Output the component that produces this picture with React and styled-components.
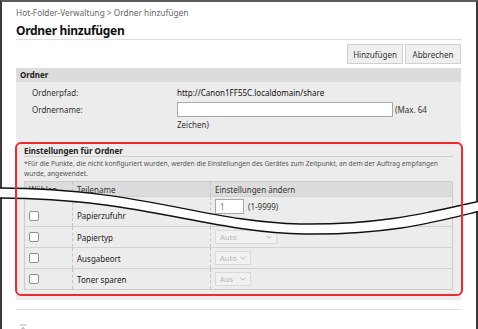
import React from "react";
import styled, { createGlobalStyle } from "styled-components";

const GlobalStyle = createGlobalStyle`
  html, body { margin: 0; padding: 0; background: #fff; }
  body { font-family: "Noto Sans", "Open Sans", sans-serif; color: #333; }
  * { box-sizing: border-box; }
`;

const Shot = styled.div`
  position: relative;
  width: 478px;
  height: 329px;
  overflow: hidden;
`;

const Frame = styled.div`
  height: 100%;
  background: #fff;
  border-top: 2px solid #5c5c5c;
  border-left: 2px solid #3a3a3a;
  border-right: 2px solid #3a3a3a;
  padding: 0 14px;
`;

const Crumb = styled.div`
  margin-top: 5px;
  font-size: 8.3px;
  line-height: 12px;
  color: #666;
`;

const Title = styled.h1`
  margin: 4px 0 0;
  font-size: 12px;
  line-height: 16px;
  letter-spacing: -0.3px;
  font-weight: 700;
  color: #111;
  border-bottom: 1px solid #dedede;
`;

const Toolbar = styled.div`
  display: flex;
  justify-content: flex-end;
  gap: 2px;
  margin-top: 4px;
  padding-right: 1px;
`;

const Button = styled.button`
  width: 56px;
  height: 20px;
  padding: 0;
  font-family: inherit;
  font-size: 8px;
  color: #333;
  background: #efefef;
  border: 1px solid #d0d0d0;
`;

const Section = styled.section`
  margin-top: 4px;
  margin-right: 1px;
  background: #ececec;
  padding-bottom: 4px;
`;

const SectionHead = styled.div`
  height: 14px;
  padding-left: 4px;
  font-size: 8px;
  line-height: 14px;
  font-weight: 700;
  color: #222;
  background: #dcdcdc;
`;

const Fields = styled.div`
  display: grid;
  grid-template-columns: 145px 262px;
  row-gap: 2px;
  padding: 4px 0 0 16px;
  font-size: 8px;
  color: #333;
`;

const Label = styled.div`
  line-height: ${({ $h }) => $h || 14}px;
`;

const Value = styled.div`
  line-height: ${({ $h }) => $h || 14}px;
  color: ${({ $dark }) => ($dark ? "#111" : "#333")};
`;

const TextBox = styled.input`
  width: ${({ $w }) => $w}px;
  height: 15px;
  margin: 0;
  padding: 0 4px;
  vertical-align: top;
  font-family: inherit;
  font-size: 8px;
  color: #777;
  background: #fff;
  border: 1px solid #a8a8a8;
`;

const Settings = styled.div`
  position: relative;
  margin-top: 10px;
  padding: 3px 8px 6px;

  &::after {
    content: "";
    position: absolute;
    top: 0;
    left: -1px;
    right: -2px;
    bottom: 0;
    border: 2px solid #ee2a2e;
    border-radius: 6px;
    z-index: 3;
    pointer-events: none;
  }
`;

const SettingsTitle = styled.div`
  font-size: 8px;
  line-height: 11px;
  font-weight: 700;
  color: #222;
  border-bottom: 1px solid #cfcfcf;
`;

const Note = styled.p`
  margin: 2px 0 0;
  font-size: 6.65px;
  line-height: 10px;
  color: #555;
`;

const Table = styled.table`
  width: 429px;
  margin-top: 2px;
  border-collapse: collapse;
  font-size: 8px;
  color: #222;
  border: 1px solid #cdcdcd;
`;

const Th = styled.th`
  width: ${({ $w }) => $w}px;
  height: 15px;
  padding: 0 4px;
  text-align: left;
  font-weight: 400;
  color: #333;
  background: #dcdcdc;
  border-left: 1px dashed #c4c4c4;
  &:first-child { border-left: none; }
`;

const Td = styled.td`
  height: ${({ $h }) => $h}px;
  padding: ${({ $top }) => ($top ? "2px 4px 0" : "0 4px")};
  padding-bottom: ${({ $pb }) => $pb || 0}px;
  vertical-align: ${({ $top, $pb }) => ($top ? "top" : $pb ? "bottom" : "middle")};
  line-height: 11px;
  border-top: 1px solid #d2d2d2;
  border-left: 1px dashed #c4c4c4;
  &:first-child { border-left: none; }
`;

const Check = styled.span`
  display: block;
  width: 10px;
  height: 10px;
  background: #fff;
  border: 1px solid #8e8e8e;
  border-radius: 2px;
`;

const Range = styled.span`
  margin-left: 4px;
  line-height: 15px;
  vertical-align: top;
  color: #333;
`;

const Select = styled.div`
  display: flex;
  align-items: center;
  justify-content: space-between;
  width: ${({ $w }) => $w}px;
  height: 14px;
  padding: 0 4px;
  font-size: 7.5px;
  color: #b4b4b4;
  background: #f1f1f1;
  border: 1px solid #dadada;
`;

const Footer = styled.div`
  margin-top: 9px;
  padding: 4px 0 0 3px;
  border-top: 1px solid #e2e2e2;
`;

const Band = styled.svg`
  position: absolute;
  inset: 0;
  z-index: 2;
  pointer-events: none;
`;

const Chevron = () => (
  <svg width="6" height="4" viewBox="0 0 6 4">
    <path d="M0.5 0.8 L3 3.2 L5.5 0.8" fill="none" stroke="#b0b0b0" strokeWidth="0.9" />
  </svg>
);

const rows = [
  { name: "Papiertyp", value: "Auto", w: 62 },
  { name: "Ausgabeort", value: "Auto", w: 36 },
  { name: "Toner sparen", value: "Aus", w: 36 },
];

const upper = "M-2 188 C 140 188 205 222 300 224 C 385 225 430 212 480 201";
const lower = "M-2 198 C 140 198 205 232 305 234 C 390 235 435 222 480 211";
const bandFill = "M-2 188 C 140 188 205 222 300 224 C 385 225 430 212 480 201 L480 211 C 435 222 390 235 305 234 C 205 232 140 198 -2 198 Z";

export default function App() {
  return (
    <>
      <GlobalStyle />
      <Shot>
        <Frame>
          <Crumb>Hot-Folder-Verwaltung &gt; Ordner hinzufügen</Crumb>
          <Title>Ordner hinzufügen</Title>
          <Toolbar>
            <Button>Hinzufügen</Button>
            <Button>Abbrechen</Button>
          </Toolbar>
          <Section>
            <SectionHead>Ordner</SectionHead>
            <Fields>
              <Label>Ordnerpfad:</Label>
              <Value $dark>http://Canon1FF55C.localdomain/share</Value>
              <Label $h={16}>Ordnername:</Label>
              <Value $h={15}>
                <TextBox $w={216} defaultValue="" /> (Max. 64 Zeichen)
              </Value>
            </Fields>
            <Settings>
              <SettingsTitle>Einstellungen für Ordner</SettingsTitle>
              <Note>
                *Für die Punkte, die nicht konfiguriert wurden, werden die Einstellungen des Gerätes zum
                Zeitpunkt, an dem der Auftrag empfangen wurde, angewendet.
              </Note>
              <Table>
                <thead>
                  <tr>
                    <Th $w={48}>Wählen</Th>
                    <Th $w={138}>Teilename</Th>
                    <Th>Einstellungen ändern</Th>
                  </tr>
                </thead>
                <tbody>
                  <tr>
                    <Td $h={30} $pb={5}><Check /></Td>
                    <Td $h={30} $pb={5}>Papierzufuhr</Td>
                    <Td $h={30} $top>
                      <TextBox $w={29} defaultValue="1" />
                      <Range>(1-9999)</Range>
                    </Td>
                  </tr>
                  {rows.map((r) => (
                    <tr key={r.name}>
                      <Td $h={21}><Check /></Td>
                      <Td $h={21}>{r.name}</Td>
                      <Td $h={21}>
                        <Select $w={r.w}>
                          {r.value}
                          <Chevron />
                        </Select>
                      </Td>
                    </tr>
                  ))}
                </tbody>
              </Table>
            </Settings>
          </Section>
          <Footer>
            <svg width="8" height="7" viewBox="0 0 8 7">
              <rect x="0.5" y="0.5" width="7" height="1" fill="#b8b8b8" />
              <path d="M4 2.5 L7 6 L1 6 Z" fill="#c4c4c4" />
            </svg>
          </Footer>
        </Frame>
        <Band viewBox="0 0 478 329" width="478" height="329">
          <path d={bandFill} fill="#fff" />
          <path d={upper} fill="none" stroke="#111" strokeWidth="1.4" />
          <path d={lower} fill="none" stroke="#111" strokeWidth="1.4" />
        </Band>
      </Shot>
    </>
  );
}
